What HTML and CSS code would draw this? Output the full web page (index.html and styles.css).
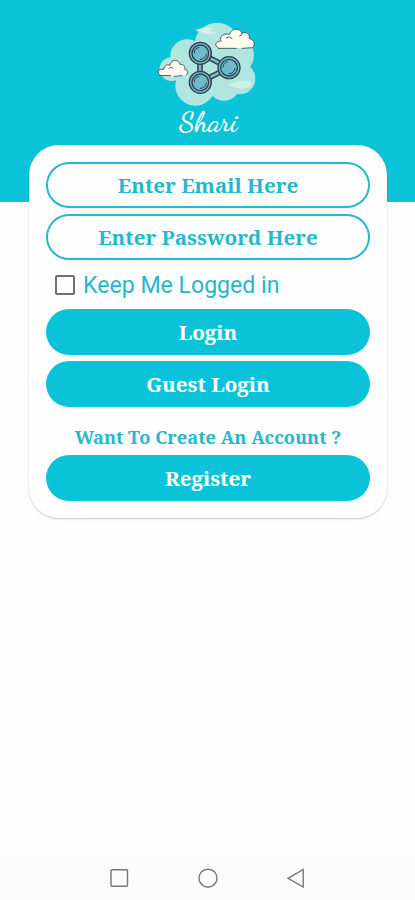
FILE: index.html
```html
<!DOCTYPE html>
<html lang="en">
<head>
<meta charset="utf-8">
<title>Shari</title>
<link rel="stylesheet" href="styles.css">
</head>
<body>
<main class="screen">
  <header class="hero">
    <svg class="logo" viewBox="0 0 375 405" role="img" aria-label="Shari">
      <g class="mist">
        <circle cx="216" cy="106" r="68"/><circle cx="126" cy="138" r="50"/><circle cx="80" cy="177" r="36"/>
        <circle cx="151" cy="227" r="60"/><circle cx="237" cy="222" r="50"/><circle cx="284" cy="206" r="47"/>
        <circle cx="268" cy="136" r="59"/><circle cx="190" cy="180" r="75"/>
      </g>
      <path class="wisp" d="M151 61Q177 47 207 56L191 63Q208 65 215 72L178 71Q163 67 151 61ZM249 225Q285 207 312 214L322 221L309 232Q287 239 270 231Z"/>
      <path class="link-edge" d="M165 133V215M165 130L252 173M165 217L252 173"/>
      <path class="link-fill" d="M165 133V215M165 130L252 173M165 217L252 173"/>
      <g class="node"><circle cx="166" cy="130" r="33"/><circle cx="166" cy="130" r="25"/><path d="M148 130A18 18 0 0 1 163 112M184 131A18 18 0 0 1 165 148"/></g>
      <g class="node"><circle cx="252" cy="173" r="33"/><circle cx="252" cy="173" r="25"/><path d="M234 173A18 18 0 0 1 249 155M270 174A18 18 0 0 1 251 191"/></g>
      <g class="node"><circle cx="166" cy="217" r="33"/><circle cx="166" cy="217" r="25"/><path d="M148 217A18 18 0 0 1 163 199M184 218A18 18 0 0 1 165 235"/></g>
      <path class="cloud" d="M216 114C206 104 212 92 229 93C226 78 239 69 254 73C258 55 282 51 292 69C306 64 314 71 313 85C329 88 333 106 321 114Z"/>
      <path class="cloud-line" d="M220 114C206 107 211 92 229 93M226 88C227 75 240 69 254 73C258 55 282 51 292 69M288 70C304 64 315 70 313 86C328 88 332 105 322 113L292 115M220 115H274M244 83Q253 77 261 85M284 78L291 74"/>
      <path class="cloud" d="M43 196C34 187 41 175 56 178C58 166 67 162 75 166C77 148 100 145 106 164C116 162 121 170 119 178C130 179 131 192 123 196L89 200Z"/>
      <path class="cloud-line" d="M44 196C35 186 41 176 56 178C58 166 67 162 75 166C77 148 100 145 106 164C117 162 121 170 119 178C130 179 131 192 123 195M44 196L77 197M88 199L111 197M72 174Q80 169 84 175"/>
      <text class="brand" x="102" y="362" textLength="176" lengthAdjust="spacingAndGlyphs">Shari</text>
    </svg>
  </header>
  <form class="card">
    <div class="pill field"><span>Enter Email Here</span></div>
    <div class="pill field"><span>Enter Password Here</span></div>
    <div class="keep"><span class="box"></span><span>Keep Me Logged in</span></div>
    <div class="pill action"><span>Login</span></div>
    <div class="pill action"><span>Guest Login</span></div>
    <div class="prompt"><span>Want To Create An Account ?</span></div>
    <div class="pill action"><span>Register</span></div>
  </form>
  <nav class="system">
    <svg viewBox="0 0 20 20"><rect x="2" y="1.7" width="16.5" height="16.5" rx="1"/></svg>
    <svg viewBox="0 0 20 20"><circle cx="10" cy="10.2" r="9"/></svg>
    <svg viewBox="0 0 20 20"><path d="M2 10.3L17.2 1.5V19Z"/></svg>
  </nav>
</main>
</body>
</html>
```
FILE: styles.css
```css
* { box-sizing: border-box; }
body { margin: 0; background: #fefefe; }
.screen {
  height: 900px;
  display: flex;
  flex-direction: column;
  overflow: hidden;
}
.hero {
  height: 202px;
  flex: none;
  background: #0bc3d8;
  padding: 10px 0 0 145px;
}
.logo { display: block; width: 125px; height: 135px; }
.mist { fill: #b1e5e0; }
.wisp { fill: #d3f1e9; }
.link-edge { fill: none; stroke: #34434c; stroke-width: 17; }
.link-fill { fill: none; stroke: #75bdcc; stroke-width: 8; }
.node { stroke: #34434c; stroke-width: 4; fill: #6fb9ca; }
.node path { fill: none; stroke-width: 3; }
.cloud { fill: #fffaf0; }
.cloud-line { fill: none; stroke: #3d474b; stroke-width: 2.6; stroke-linecap: round; }
.brand {
  font: 600 82px "Dancing Script", "Liberation Serif", cursive;
  fill: #fff;
}
.card {
  width: 358px;
  height: 373px;
  flex: none;
  margin: -57px 0 0 29px;
  padding: 17px;
  border-radius: 30px;
  background: #fefefe;
  box-shadow: 0 1px 2px rgba(0, 0, 0, .22);
}
.pill {
  height: 46px;
  margin-bottom: 6px;
  border-radius: 23px;
  display: flex;
  align-items: center;
  justify-content: center;
  white-space: nowrap;
  font: bold 20.6px/28px "Noto Serif", "Droid Serif", "DejaVu Serif Condensed", "DejaVu Serif", serif;
}
.field { border: 2px solid #25b8cb; color: #25b8cb; }
.action { background: #0bc3d8; color: #fff; }
.keep {
  height: 43px;
  margin: -2px 0 2px;
  padding-left: 9px;
  display: flex;
  align-items: center;
  color: #25b8cb;
  font: 23.1px/28px Roboto, sans-serif;
}
.box {
  width: 20px;
  height: 20px;
  margin: -2px 8px 0 0;
  border: 2px solid #707070;
  border-radius: 2px;
}
.prompt {
  height: 29px;
  margin: 15px 0 4px;
  display: flex;
  align-items: center;
  justify-content: center;
  white-space: nowrap;
  color: #25b8cb;
  font: bold 18.2px/26px "Noto Serif", "Droid Serif", "DejaVu Serif Condensed", "DejaVu Serif", serif;
}
.system {
  height: 44px;
  margin-top: auto;
  padding: 0 109px;
  display: flex;
  align-items: center;
  justify-content: space-between;
  background: #fbfbfb;
}
.system svg { width: 20px; height: 20px; fill: none; stroke: #777; stroke-width: 1.4; }
```
